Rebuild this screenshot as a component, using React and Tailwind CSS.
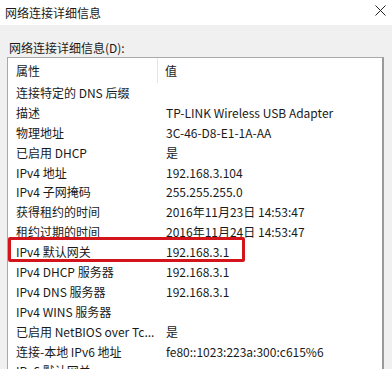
const rows = [
  ["连接特定的 DNS 后缀", ""],
  ["描述", "TP-LINK Wireless USB Adapter"],
  ["物理地址", "3C-46-D8-E1-1A-AA"],
  ["已启用 DHCP", "是"],
  ["IPv4 地址", "192.168.3.104"],
  ["IPv4 子网掩码", "255.255.255.0"],
  ["获得租约的时间", "2016年11月23日 14:53:47"],
  ["租约过期的时间", "2016年11月24日 14:53:47"],
  ["IPv4 默认网关", "192.168.3.1"],
  ["IPv4 DHCP 服务器", "192.168.3.1"],
  ["IPv4 DNS 服务器", "192.168.3.1"],
  ["IPv4 WINS 服务器", ""],
  ["已启用 NetBIOS over Tc...", "是"],
  ["连接-本地 IPv6 地址", "fe80::1023:223a:300:c615%6"],
  ["IPv6 默认网关", ""],
];

export default function App() {
  return (
    <div
      className="w-[392px] h-[369px] overflow-hidden bg-[#f0f0f0] text-[12px] text-[#1a1a1a]"
      style={{ fontFamily: '"Noto Sans CJK SC", "Noto Sans", sans-serif' }}
    >
      <div className="h-[25px] bg-white flex items-center justify-between pl-[5px] pr-[6px]">
        <span className="leading-none">网络连接详细信息</span>
        <svg width="11" height="11" viewBox="0 0 11 11" className="mb-[4px]">
          <path d="M0.5 0.5 L10.5 10.5 M10.5 0.5 L0.5 10.5" stroke="#222" strokeWidth="1" />
        </svg>
      </div>
      <div className="pt-[14px] pl-[9px] h-[18px] leading-[18px] box-content">网络连接详细信息(D):</div>
      <div className="mt-[0px] ml-[7px] mr-[8px] bg-white border border-[#a9a9a9] border-r-2 border-r-[#9a9a9a] border-b-0 h-[320px] overflow-hidden">
        <div className="h-[25px] flex items-center">
          <div className="w-[150px] pl-[8px] h-full flex items-center border-r border-[#e5e5e5]">属性</div>
          <div className="pl-[7px]">值</div>
        </div>
        {rows.map(([k, v], i) => (
          <div key={i} className="relative h-[19.9px] flex items-center">
            <div className="w-[150px] pl-[8px] whitespace-nowrap">{k}</div>
            <div className="pl-[8px] whitespace-nowrap">{v}</div>
            {i === 8 && (
              <div className="absolute left-[0px] top-[-5px] w-[237px] h-[25px] border-[3px] border-[#d3141b] rounded-[2px]" />
            )}
          </div>
        ))}
      </div>
    </div>
  );
}
